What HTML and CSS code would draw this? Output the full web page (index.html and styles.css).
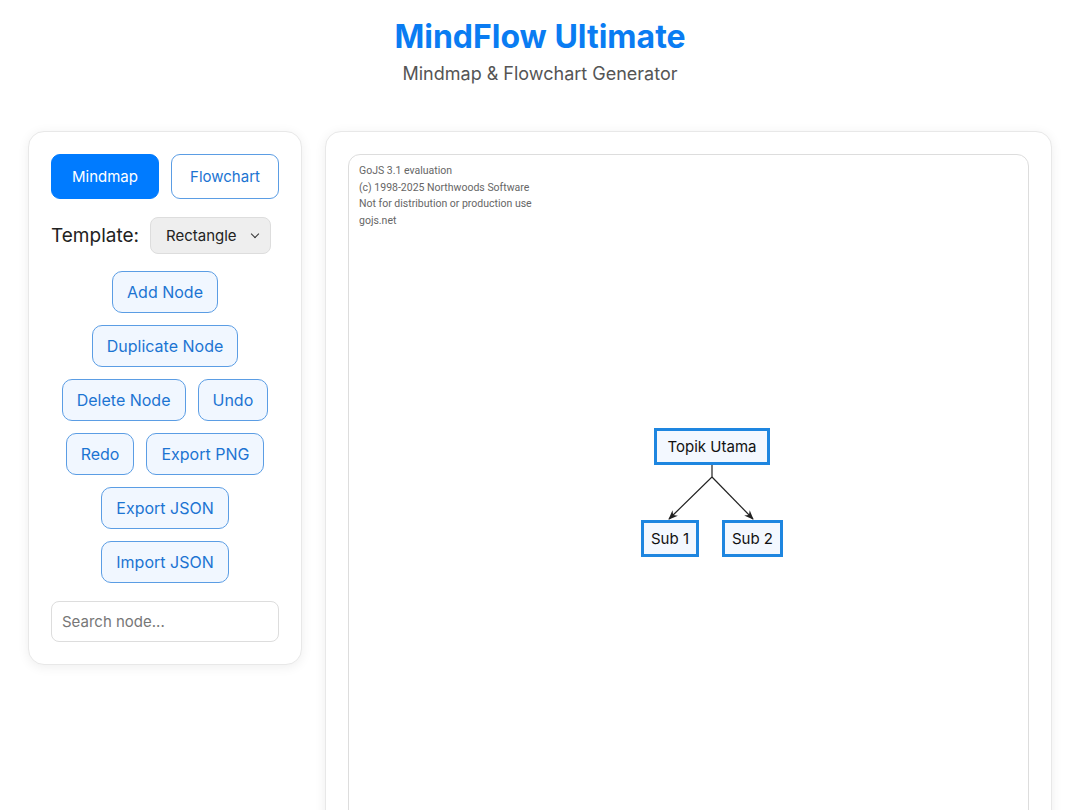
FILE: index.html
```html
<!DOCTYPE html>
<html lang="en">
<head>
<meta charset="utf-8">
<title>MindFlow Ultimate</title>
<link rel="stylesheet" href="styles.css">
</head>
<body>
<header class="header">
  <h1 class="title">MindFlow Ultimate</h1>
  <p class="subtitle">Mindmap &amp; Flowchart Generator</p>
</header>
<main class="container">
  <aside class="panel sidebar">
    <div class="mode-row">
      <button class="mode-btn active">Mindmap</button>
      <button class="mode-btn">Flowchart</button>
    </div>
    <div class="template-row">
      <label class="template-label" for="tpl">Template:</label>
      <div class="select-wrap">
        <select id="tpl" class="template-select">
          <option>Rectangle</option>
          <option>Ellipse</option>
        </select>
      </div>
    </div>
    <div class="actions">
      <button class="action-btn">Add Node</button>
      <button class="action-btn">Duplicate Node</button>
      <button class="action-btn">Delete Node</button>
      <button class="action-btn">Undo</button>
      <button class="action-btn">Redo</button>
      <button class="action-btn">Export PNG</button>
      <button class="action-btn">Export JSON</button>
      <button class="action-btn">Import JSON</button>
    </div>
    <input class="search" type="text" placeholder="Search node...">
  </aside>
  <section class="panel canvas-panel">
    <div class="diagram">
      <div class="watermark">
        <div>GoJS 3.1 evaluation</div>
        <div>(c) 1998-2025 Northwoods Software</div>
        <div>Not for distribution or production use</div>
        <div>gojs.net</div>
      </div>
      <svg class="links" width="500" height="420" viewBox="0 0 500 420">
        <defs>
          <marker id="arr" viewBox="0 0 10 10" refX="9" refY="5" markerWidth="8" markerHeight="8" orient="auto">
            <path d="M0,1 L10,5 L0,9 L3,5 Z" fill="#222"/>
          </marker>
        </defs>
        <path d="M363,309 L363,322 L320,364" fill="none" stroke="#222" stroke-width="1.2" marker-end="url(#arr)"/>
        <path d="M363,322 L404,364" fill="none" stroke="#222" stroke-width="1.2" marker-end="url(#arr)"/>
      </svg>
      <div class="node node-root">Topik Utama</div>
      <div class="node node-sub1">Sub 1</div>
      <div class="node node-sub2">Sub 2</div>
    </div>
  </section>
</main>
</body>
</html>
```
FILE: styles.css
```css
* { box-sizing: border-box; }
body {
  margin: 0;
  background: #ffffff;
  font-family: "Inter", "Open Sans", sans-serif;
  color: #222;
  overflow: hidden;
}
.header {
  text-align: center;
  padding-top: 18px;
}
.title {
  margin: 0;
  font-size: 32px;
  line-height: 38px;
  font-weight: 700;
  color: #0a7cf2;
}
.subtitle {
  margin: 5px 0 0;
  font-size: 18px;
  line-height: 25px;
  color: #555;
}
.container {
  display: flex;
  align-items: flex-start;
  gap: 23px;
  padding: 0 28px;
  margin-top: 45px;
}
.panel {
  background: #fff;
  border: 1px solid #e8e8e8;
  border-radius: 16px;
  box-shadow: 0 2px 12px rgba(0,0,0,0.07);
  padding: 22px;
}
.sidebar {
  width: 274px;
  flex: none;
}
.mode-row {
  display: flex;
  gap: 12px;
}
.mode-btn {
  flex: 1;
  height: 45px;
  border-radius: 9px;
  border: 1px solid #5b9de4;
  background: #fff;
  color: #1c74d2;
  font-family: inherit;
  font-size: 15px;
}
.mode-btn.active {
  background: #007bff;
  border-color: #007bff;
  color: #fff;
}
.template-row {
  display: flex;
  align-items: center;
  gap: 11px;
  margin-top: 18px;
}
.template-label {
  font-size: 19px;
  color: #222;
}
.select-wrap {
  position: relative;
  width: 121px;
  height: 37px;
}
.select-wrap::after {
  content: "";
  position: absolute;
  right: 13px;
  top: 14px;
  width: 5px;
  height: 5px;
  border-right: 1.5px solid #333;
  border-bottom: 1.5px solid #333;
  transform: rotate(45deg);
  pointer-events: none;
}
.template-select {
  appearance: none;
  -webkit-appearance: none;
  width: 100%;
  height: 100%;
  background: #eeeeee;
  border: 1px solid #dddddd;
  border-radius: 8px;
  font-family: inherit;
  font-size: 15px;
  color: #222;
  padding: 0 0 0 15px;
}
.actions {
  display: flex;
  flex-wrap: wrap;
  justify-content: center;
  gap: 12px;
  margin-top: 17px;
}
.action-btn {
  height: 42px;
  padding: 0 14px;
  background: #f1f7ff;
  border: 1px solid #5b9de4;
  border-radius: 10px;
  color: #1c74d2;
  font-family: inherit;
  font-size: 16px;
}
.search {
  display: block;
  width: 100%;
  height: 41px;
  margin-top: 18px;
  border: 1px solid #dddddd;
  border-radius: 8px;
  padding: 0 10px;
  font-family: inherit;
  font-size: 15px;
  color: #222;
}
.search::placeholder { color: #777; }
.canvas-panel {
  flex: 1;
  height: 760px;
}
.diagram {
  position: relative;
  height: 720px;
  border: 1px solid #dddddd;
  border-radius: 12px;
}
.watermark {
  padding: 8px 10px;
  font-family: "Roboto", "Liberation Sans", sans-serif;
  font-size: 10.5px;
  line-height: 16.5px;
  color: #666;
}
.links {
  position: absolute;
  left: 0;
  top: 0;
}
.node {
  position: absolute;
  height: 37px;
  border: 3px solid #1e86e0;
  background: #f3f8ff;
  display: flex;
  align-items: center;
  justify-content: center;
  font-size: 15px;
  color: #111;
}
.node-root { left: 305px; top: 273px; width: 116px; }
.node-sub1 { left: 292px; top: 365px; width: 58px; }
.node-sub2 { left: 373px; top: 365px; width: 61px; }
```
